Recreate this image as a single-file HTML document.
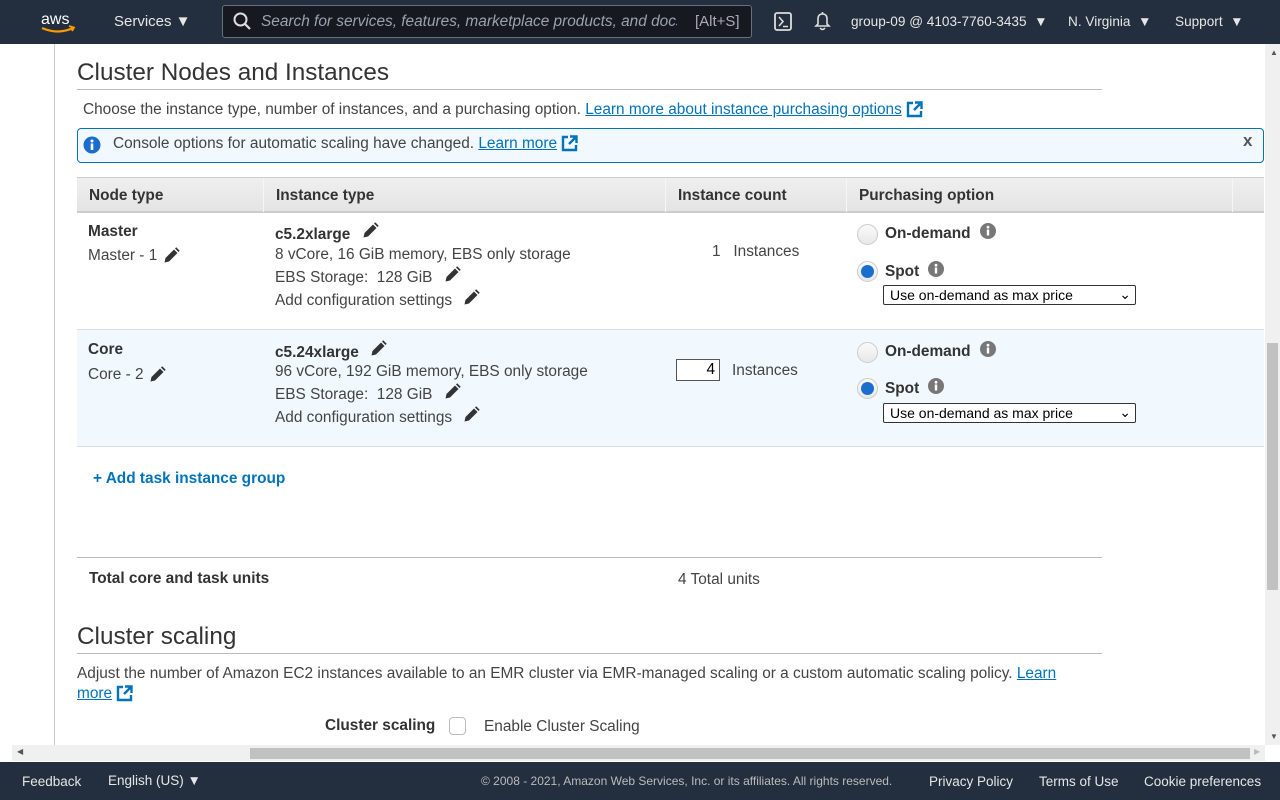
<!DOCTYPE html>
<html><head><meta charset="utf-8"><style>
*{box-sizing:border-box;margin:0;padding:0}
body{width:1280px;height:800px;overflow:hidden;position:relative;background:#fff;font-family:"Liberation Sans",sans-serif;color:#444;font-size:15.4px}
.a{position:absolute;white-space:nowrap}
.nav{left:0;top:0;width:1280px;height:44px;background:#232f3e;color:#e6e6e6;font-size:14px}
.lnk{color:#0073bb;text-decoration:underline}
.b{font-weight:bold;color:#333}
.pen{display:inline-block;vertical-align:middle}
.sel{border:1px solid #333;border-radius:2px;background:#fff;width:253px;height:20px;font-size:14px;color:#000;padding:1px 6px;line-height:16px}
.radio{width:21px;height:21px;border-radius:50%;border:1px solid #ccc;background:linear-gradient(#fafafa,#e8e8e8)}
.radio.on::after{content:"";position:absolute;left:3px;top:3px;width:13px;height:13px;border-radius:50%;background:#1a6fce}
.foot{left:0;top:762px;width:1280px;height:38px;background:#232f3e;color:#e6e6e6;font-size:13.5px}
</style></head><body>
<div class="a nav">
 <svg class="a" style="left:40px;top:10px" width="38" height="24" viewBox="0 0 38 24"><text x="1" y="14" fill="#fff" font-family="Liberation Sans" font-size="16">aws</text><path d="M2 18 Q18 25 33 18" stroke="#f90" stroke-width="2.2" fill="none"/><path d="M29 16 L34 17.5 L32 21" stroke="#f90" stroke-width="1.8" fill="none"/></svg>
 <div class="a" style="left:114px;top:13px;font-size:15px">Services ▼</div>
 <div class="a" style="left:222px;top:5px;width:530px;height:33px;border:1px solid #687078;border-radius:3px;background:#16191f"></div>
 <svg class="a" style="left:233px;top:12px" width="18" height="19" viewBox="0 0 18 19"><circle cx="7.5" cy="7.5" r="6" stroke="#ddd" stroke-width="2" fill="none"/><path d="M12 12 L17 17" stroke="#ddd" stroke-width="2.2"/></svg>
 <div class="a" style="left:261px;top:13px;width:416px;overflow:hidden;font-style:italic;color:#9aa3ad;font-size:15.4px">Search for services, features, marketplace products, and docs</div>
 <div class="a" style="left:695px;top:13px;color:#aab;font-size:15px">[Alt+S]</div>
 <svg class="a" style="left:774px;top:12px" width="18" height="19" viewBox="0 0 18 19"><rect x="1" y="1" width="16" height="17" rx="2" stroke="#ddd" stroke-width="1.8" fill="none"/><path d="M5 5 L9 9.5 L5 14 M9 14.5 H14" stroke="#ddd" stroke-width="1.6" fill="none"/></svg>
 <svg class="a" style="left:813px;top:11px" width="19" height="21" viewBox="0 0 19 21"><path d="M3 15 L5 13 V8 Q5 3 9.5 3 Q14 3 14 8 V13 L16 15 Z M9.5 1 V3 M7 17 Q9.5 20 12 17" stroke="#ddd" stroke-width="1.6" fill="none"/></svg>
 <div class="a" style="left:851px;top:14px;font-size:13.6px">group-09 @ 4103-7760-3435 &nbsp;▼</div>
 <div class="a" style="left:1068px;top:14px;font-size:13.6px">N. Virginia &nbsp;▼</div>
 <div class="a" style="left:1175px;top:14px;font-size:13.6px">Support &nbsp;▼</div>
</div>
<div class="a" style="left:54px;top:44px;width:1px;height:701px;background:#ccc"></div>
<div class="a" style="left:77px;top:59px;font-size:24.3px;color:#333">Cluster Nodes and Instances</div>
<div class="a" style="left:77px;top:89px;width:1025px;height:1px;background:#bbb"></div>
<div class="a" style="left:83px;top:101px">Choose the instance type, number of instances, and a purchasing option. <span class="lnk">Learn more about instance purchasing options</span> <svg class="pen" width="17" height="17" viewBox="0 0 17 17"><path d="M7 2 H2 V15 H15 V10" stroke="#0073bb" stroke-width="2.4" fill="none"/><path d="M9 1.5 H15.5 V8 M15 2 L8 9" stroke="#0073bb" stroke-width="2.4" fill="none"/></svg></div>
<div class="a" style="left:77px;top:128px;width:1187px;height:35px;border:1px solid #0073bb;border-radius:4px;background:#f1f8fe"></div>
<svg class="a" style="left:83px;top:136px" width="18" height="18" viewBox="0 0 18 18"><circle cx="9" cy="9" r="8.5" fill="#1a6fce"/><rect x="7.7" y="7.5" width="2.6" height="6.5" fill="#fff"/><circle cx="9" cy="5" r="1.5" fill="#fff"/></svg>
<div class="a" style="left:113px;top:135px">Console options for automatic scaling have changed. <span class="lnk">Learn more</span> <svg class="pen" width="17" height="17" viewBox="0 0 17 17"><path d="M7 2 H2 V15 H15 V10" stroke="#0073bb" stroke-width="2.4" fill="none"/><path d="M9 1.5 H15.5 V8 M15 2 L8 9" stroke="#0073bb" stroke-width="2.4" fill="none"/></svg></div>
<div class="a" style="left:1243px;top:131px;font-size:17px;font-weight:bold;color:#555">x</div>

<div class="a" style="left:77px;top:177px;width:1187px;height:36px;background:linear-gradient(#efefef,#e4e4e4);border-top:1px solid #ccc;border-bottom:2px solid #ccc"></div>
<div class="a" style="left:263px;top:178px;width:1px;height:34px;background:#f6f6f6"></div>
<div class="a" style="left:665px;top:178px;width:1px;height:34px;background:#f6f6f6"></div>
<div class="a" style="left:846px;top:178px;width:1px;height:34px;background:#f6f6f6"></div>
<div class="a" style="left:1232px;top:178px;width:1px;height:34px;background:#f6f6f6"></div>
<div class="a b" style="left:89px;top:187px">Node type</div>
<div class="a b" style="left:276px;top:187px">Instance type</div>
<div class="a b" style="left:678px;top:187px">Instance count</div>
<div class="a b" style="left:859px;top:187px">Purchasing option</div>

<div class="a" style="left:77px;top:329px;width:1187px;height:1px;background:#ddd"></div>
<div class="a" style="left:77px;top:330px;width:1187px;height:117px;background:#f1f8fe;border-bottom:1px solid #ddd"></div>

<svg width="0" height="0" style="position:absolute"><defs><symbol id="p" viewBox="0 0 18 18"><path d="M2.5 15.5 L3.5 11 L12 2.5 L15.5 6 L7 14.5 Z" fill="#333"/><path d="M13 1.5 L14.2 0.3 L17.7 3.8 L16.5 5 Z" fill="#333"/></symbol><symbol id="i" viewBox="0 0 16 16"><circle cx="8" cy="8" r="8" fill="#777"/><rect x="6.8" y="6.5" width="2.4" height="6" fill="#fff"/><circle cx="8" cy="4.2" r="1.4" fill="#fff"/></symbol></defs></svg>

<div class="a b" style="left:88px;top:223px">Master</div>
<div class="a" style="left:88px;top:247px">Master - 1 <svg class="pen" width="18" height="18"><use href="#p"/></svg></div>
<div class="a b" style="left:275px;top:226px">c5.2xlarge <svg class="pen" width="18" height="18" style="margin-left:6px;margin-top:-8px"><use href="#p"/></svg></div>
<div class="a" style="left:275px;top:246px">8 vCore, 16 GiB memory, EBS only storage</div>
<div class="a" style="left:275px;top:269px">EBS Storage:&nbsp; 128 GiB <svg class="pen" width="18" height="18" style="margin-left:6px;margin-top:-6px"><use href="#p"/></svg></div>
<div class="a" style="left:275px;top:292px">Add configuration settings <svg class="pen" width="18" height="18" style="margin-left:6px;margin-top:-6px"><use href="#p"/></svg></div>
<div class="a" style="left:712px;top:243px">1&nbsp;&nbsp; Instances</div>
<div class="a radio" style="left:857px;top:224px"></div>
<div class="a b" style="left:885px;top:225px">On-demand <svg class="pen" width="16" height="16" style="margin-left:5px;margin-top:-5px"><use href="#i"/></svg></div>
<div class="a radio on" style="left:857px;top:261px"></div>
<div class="a b" style="left:885px;top:263px">Spot <svg class="pen" width="16" height="16" style="margin-left:5px;margin-top:-5px"><use href="#i"/></svg></div>
<div class="a sel" style="left:883px;top:285px">Use on-demand as max price<span style="position:absolute;right:4px;top:0">⌄</span></div>

<div class="a b" style="left:88px;top:341px">Core</div>
<div class="a" style="left:88px;top:366px">Core - 2 <svg class="pen" width="18" height="18"><use href="#p"/></svg></div>
<div class="a b" style="left:275px;top:344px">c5.24xlarge <svg class="pen" width="18" height="18" style="margin-left:6px;margin-top:-8px"><use href="#p"/></svg></div>
<div class="a" style="left:275px;top:363px">96 vCore, 192 GiB memory, EBS only storage</div>
<div class="a" style="left:275px;top:386px">EBS Storage:&nbsp; 128 GiB <svg class="pen" width="18" height="18" style="margin-left:6px;margin-top:-6px"><use href="#p"/></svg></div>
<div class="a" style="left:275px;top:409px">Add configuration settings <svg class="pen" width="18" height="18" style="margin-left:6px;margin-top:-6px"><use href="#p"/></svg></div>
<div class="a" style="left:676px;top:359px;width:44px;height:22px;border:1px solid #555;background:#fff;text-align:right;padding-right:4px;color:#000;line-height:20px">4</div>
<div class="a" style="left:732px;top:362px">Instances</div>
<div class="a radio" style="left:857px;top:342px"></div>
<div class="a b" style="left:885px;top:343px">On-demand <svg class="pen" width="16" height="16" style="margin-left:5px;margin-top:-5px"><use href="#i"/></svg></div>
<div class="a radio on" style="left:857px;top:378px"></div>
<div class="a b" style="left:885px;top:380px">Spot <svg class="pen" width="16" height="16" style="margin-left:5px;margin-top:-5px"><use href="#i"/></svg></div>
<div class="a sel" style="left:883px;top:403px">Use on-demand as max price<span style="position:absolute;right:4px;top:0">⌄</span></div>

<div class="a" style="left:93px;top:470px;color:#0073bb;font-weight:bold">+ Add task instance group</div>
<div class="a" style="left:77px;top:557px;width:1025px;height:1px;background:#bbb"></div>
<div class="a b" style="left:89px;top:570px">Total core and task units</div>
<div class="a" style="left:678px;top:571px">4 Total units</div>

<div class="a" style="left:77px;top:623px;font-size:24.3px;color:#333">Cluster scaling</div>
<div class="a" style="left:77px;top:653px;width:1025px;height:1px;background:#bbb"></div>
<div class="a" style="left:77px;top:665px">Adjust the number of Amazon EC2 instances available to an EMR cluster via EMR-managed scaling or a custom automatic scaling policy. <span class="lnk">Learn</span></div>
<div class="a" style="left:77px;top:685px"><span class="lnk">more</span> <svg class="pen" width="17" height="17" viewBox="0 0 17 17"><path d="M7 2 H2 V15 H15 V10" stroke="#0073bb" stroke-width="2.4" fill="none"/><path d="M9 1.5 H15.5 V8 M15 2 L8 9" stroke="#0073bb" stroke-width="2.4" fill="none"/></svg></div>
<div class="a b" style="left:325px;top:717px">Cluster scaling</div>
<div class="a" style="left:449px;top:717px;width:17px;height:18px;border:1px solid #bbb;border-radius:4px;background:#fff"></div>
<div class="a" style="left:484px;top:718px">Enable Cluster Scaling</div>

<div class="a" style="left:1265px;top:44px;width:15px;height:701px;background:#f0f0f0"></div>
<div class="a" style="left:1267px;top:343px;width:11px;height:247px;background:#c1c1c1"></div>
<div class="a" style="left:1270px;top:48px;font-size:8px;color:#555">▲</div>
<div class="a" style="left:1270px;top:732px;font-size:8px;color:#555">▼</div>
<div class="a" style="left:12px;top:745px;width:1253px;height:16px;background:#f0f0f0"></div>
<div class="a" style="left:250px;top:748px;width:1000px;height:11px;background:#c1c1c1"></div>
<div class="a" style="left:17px;top:747px;font-size:8px;color:#555">◀</div>
<div class="a" style="left:1254px;top:747px;font-size:8px;color:#bbb">▶</div>

<div class="a foot">
 <div class="a" style="left:22px;top:12px">Feedback</div>
 <div class="a" style="left:108px;top:11px">English (US) ▼</div>
 <div class="a" style="left:481px;top:12px;font-size:12px;color:#bbb">© 2008 - 2021, Amazon Web Services, Inc. or its affiliates. All rights reserved.</div>
 <div class="a" style="left:929px;top:12px">Privacy Policy</div>
 <div class="a" style="left:1039px;top:12px">Terms of Use</div>
 <div class="a" style="left:1144px;top:12px">Cookie preferences</div>
</div>
</body></html>
